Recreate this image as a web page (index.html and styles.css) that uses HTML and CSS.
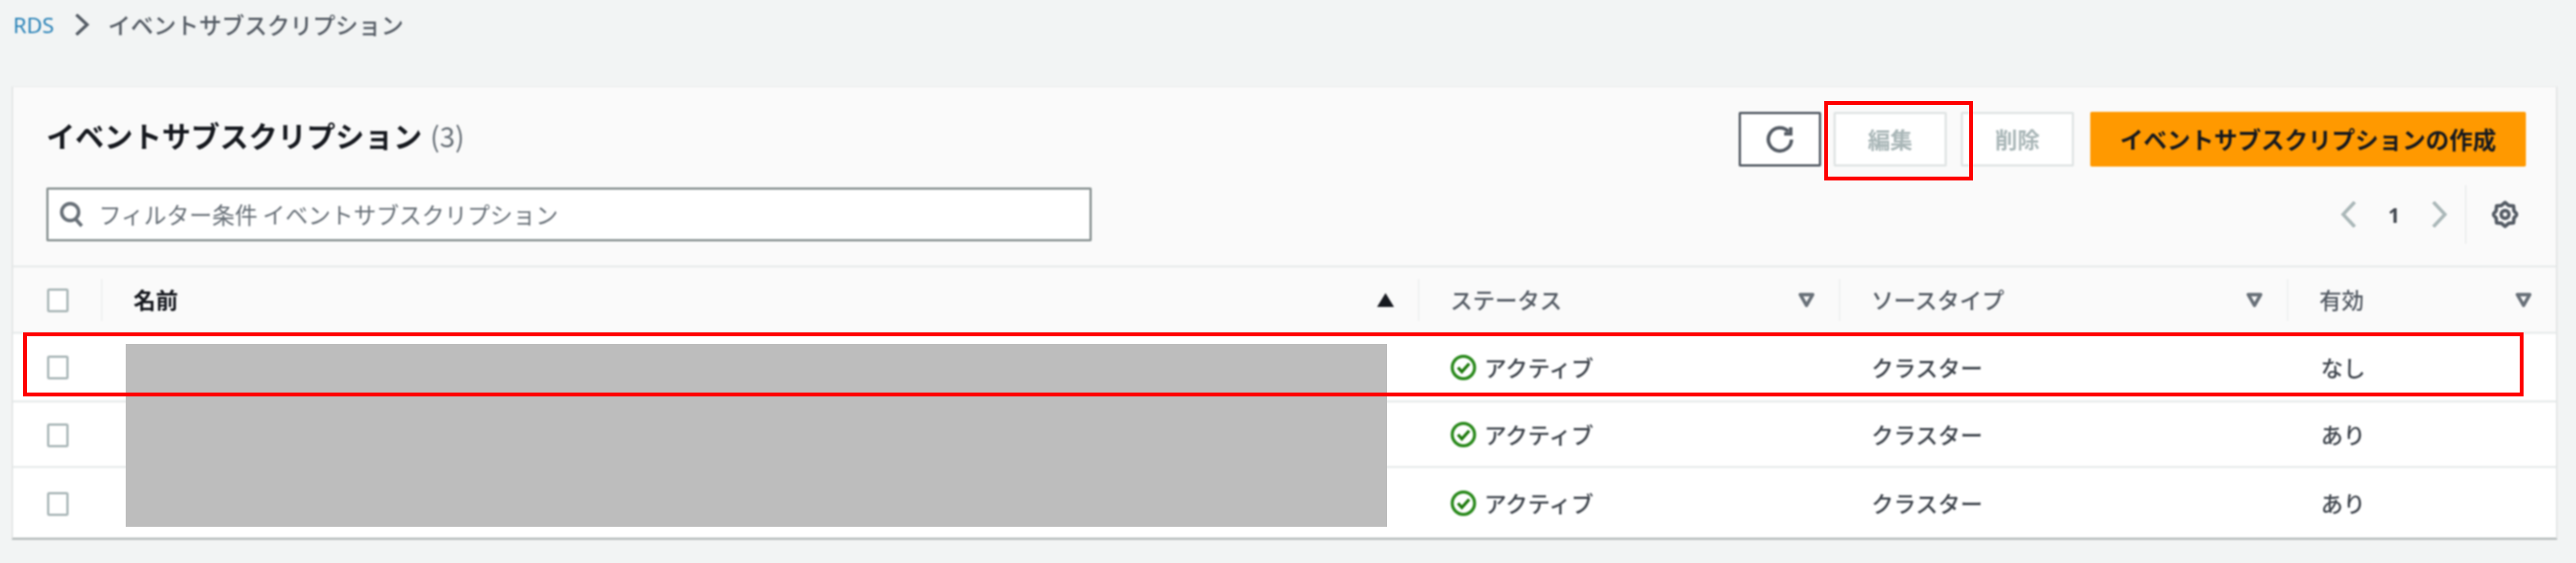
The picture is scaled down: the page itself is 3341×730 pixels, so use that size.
FILE: index.html
```html
<!DOCTYPE html>
<html lang="ja">
<head>
<meta charset="utf-8">
<title>イベントサブスクリプション</title>
<link rel="stylesheet" href="styles.css">
</head>
<body>
<div class="page">
  <nav class="breadcrumb">
    <a class="crumb-link">RDS</a>
    <svg class="crumb-sep" viewBox="0 0 22 28"><path d="M4 1 L18 14 L4 27"/></svg>
    <span>イベントサブスクリプション</span>
  </nav>

  <section class="card">
    <header class="card-head">
      <div class="head-row">
        <h1 class="title">イベントサブスクリプション <span class="count">(3)</span></h1>
        <div class="actions">
          <button class="btn btn-refresh" aria-label="更新">
            <svg class="icon-refresh" viewBox="0 0 38 38"><path d="M29.5 8.5 A15 15 0 1 0 33.5 19"/><path d="M32.5 3 V11.5 H24"/></svg>
          </button>
          <button class="btn btn-disabled btn-edit">編集</button>
          <button class="btn btn-disabled btn-delete">削除</button>
          <button class="btn btn-primary">イベントサブスクリプションの作成</button>
        </div>
      </div>
      <div class="head-row filter-row">
        <label class="search">
          <svg class="icon-search" viewBox="0 0 32 34"><circle cx="14" cy="14" r="11"/><path d="M21 23 L29 32"/></svg>
          <span class="placeholder">フィルター条件 イベントサブスクリプション</span>
        </label>
        <div class="pager">
          <svg class="chev" viewBox="0 0 20 34"><path d="M18 1 L3 17 L18 33"/></svg>
          <span class="page-num">1</span>
          <svg class="chev" viewBox="0 0 20 34"><path d="M2 1 L17 17 L2 33"/></svg>
          <span class="pager-sep"></span>
          <svg class="icon-gear" viewBox="0 0 34 36"><path d="M32.5 18 28.55 22.78 27.96 28.96 21.78 29.55 17 33.5 12.22 29.55 6.04 28.96 5.45 22.78 1.5 18 5.45 13.22 6.04 7.04 12.22 6.45 17 2.5 21.78 6.45 27.96 7.04 28.55 13.22Z"/><circle cx="17" cy="18" r="5"/></svg>
        </div>
      </div>
    </header>

    <div class="table">
      <div class="row row-head">
        <div class="cell-check"><span class="checkbox"></span></div>
        <div class="th th-name"><span>名前</span><svg class="sort" viewBox="0 0 24 20"><path class="solid" d="M12 1 L23 19 H1 Z"/></svg></div>
        <div class="th th-status"><span>ステータス</span><svg class="sort" viewBox="0 0 24 20"><path d="M4 3 H20 L12 17 Z"/></svg></div>
        <div class="th th-source"><span>ソースタイプ</span><svg class="sort" viewBox="0 0 24 20"><path d="M4 3 H20 L12 17 Z"/></svg></div>
        <div class="th th-enabled"><span>有効</span><svg class="sort" viewBox="0 0 24 20"><path d="M4 3 H20 L12 17 Z"/></svg></div>
      </div>

      <div class="row row-1">
        <div class="cell-check"><span class="checkbox"></span></div>
        <div class="td"></div>
        <div class="td td-status"><svg class="icon-ok" viewBox="0 0 34 34"><circle cx="17" cy="17" r="14.5"/><path d="M10 17 L15 22.5 L24.5 12"/></svg>アクティブ</div>
        <div class="td td-source">クラスター</div>
        <div class="td td-enabled">なし</div>
      </div>
      <div class="row row-2">
        <div class="cell-check"><span class="checkbox"></span></div>
        <div class="td"></div>
        <div class="td td-status"><svg class="icon-ok" viewBox="0 0 34 34"><circle cx="17" cy="17" r="14.5"/><path d="M10 17 L15 22.5 L24.5 12"/></svg>アクティブ</div>
        <div class="td td-source">クラスター</div>
        <div class="td td-enabled">あり</div>
      </div>
      <div class="row row-3">
        <div class="cell-check"><span class="checkbox"></span></div>
        <div class="td"></div>
        <div class="td td-status"><svg class="icon-ok" viewBox="0 0 34 34"><circle cx="17" cy="17" r="14.5"/><path d="M10 17 L15 22.5 L24.5 12"/></svg>アクティブ</div>
        <div class="td td-source">クラスター</div>
        <div class="td td-enabled">あり</div>
      </div>
    </div>
  </section>

  <div class="redaction"></div>
  <div class="mark mark-row"></div>
  <div class="mark mark-edit"></div>
</div>
</body>
</html>
```

FILE: styles.css
```css
* { box-sizing: border-box; }

html, body {
  margin: 0;
  padding: 0;
  background: #f2f4f4;
}

body {
  font-family: "Noto Sans CJK JP", "Noto Sans", sans-serif;
  font-size: 29px;
  color: #16191f;
}

.page {
  position: relative;
  width: 3341px;
  height: 730px;
  overflow: hidden;
}

/* breadcrumb */
.breadcrumb {
  display: flex;
  align-items: center;
  height: 64px;
  margin-bottom: 48px;
  padding-left: 17px;
  color: #545b64;
  font-size: 29.5px;
  font-weight: 500;
  line-height: 1;
  filter: blur(0.8px);
}
.crumb-link { color: #2b83b8; font-family: "Noto Sans", sans-serif; font-weight: 400; font-size: 28px; letter-spacing: 0; width: 78px; }
.crumb-sep { width: 22px; height: 28px; margin-right: 23px; fill: none; stroke: #545b64; stroke-width: 4; }

/* card */
.card {
  width: 3302px;
  height: 588px;
  margin-left: 15px;
  background: #fff;
  border-left: 2px solid #e3e6e6;
  border-right: 2px solid #e3e6e6;
  border-top: 1px solid #eaeded;
  border-bottom: 3px solid #b9bebe;
  filter: blur(0.8px);
}

.card-head {
  height: 234px;
  padding: 32px 39px 0 43px;
  background: #fafafa;
  border-bottom: 3px solid #eaeded;
}

.head-row {
  display: flex;
  justify-content: space-between;
  align-items: flex-start;
}

.filter-row {
  align-items: center;
  margin-top: 24px;
}

.title {
  margin: 0;
  font-size: 37.5px;
  line-height: 60px;
  font-weight: 700;
  color: #16191f;
}
.count { color: #687078; font-weight: 400; font-size: 36px; margin-left: 2px; }

/* buttons */
.actions { display: flex; }

.btn {
  height: 71px;
  padding: 0;
  font: inherit;
  font-size: 29px;
  font-weight: 700;
  line-height: 1;
  background: #fff;
  border-radius: 2px;
}
.btn-refresh {
  width: 107px;
  margin-right: 16px;
  border: 3px solid #545b64;
  display: flex;
  align-items: center;
  justify-content: center;
}
.icon-refresh { width: 38px; height: 38px; fill: none; stroke: #545b64; stroke-width: 4.5; }
.btn-disabled { border: 3px solid #e1e5e5; color: #aab7b8; }
.btn-edit { width: 147px; margin-right: 18px; }
.btn-delete { width: 147px; margin-right: 21px; }
.btn-primary { width: 565px; border: 0; background: #f90; color: #16191f; font-size: 30.5px; }

/* search */
.search {
  display: flex;
  align-items: center;
  width: 1356px;
  height: 70px;
  padding-left: 14px;
  background: #fff;
  border: 3px solid #8d9696;
  border-radius: 2px;
}
.icon-search { width: 32px; height: 34px; margin-right: 19px; flex: none; fill: none; stroke: #687078; stroke-width: 4.5; }
.placeholder { color: #687078; font-size: 29.5px; line-height: 1; }

/* pagination */
.pager { display: flex; align-items: center; height: 76px; margin-right: 10px; }
.chev { width: 20px; height: 34px; fill: none; stroke: #aab7b8; stroke-width: 4.5; }
.page-num { width: 98px; text-align: center; font-family: "Noto Sans", sans-serif; font-size: 27px; font-weight: 700; line-height: 1; color: #3f454d; }
.pager-sep { width: 2px; height: 76px; margin: 0 33px 0 23px; background: #eaeded; }
.icon-gear { width: 34px; height: 36px; fill: none; stroke: #545b64; stroke-width: 4.5; stroke-linejoin: round; }

/* table */
.row {
  display: grid;
  grid-template-columns: 114px 1708px 546px 581px 1fr;
  align-items: center;
  border-bottom: 3px solid #eaeded;
}
.row-head { height: 86px; background: #fafafa; }
.row-1 { height: 89px; }
.row-2 { height: 85px; }
.row-3 { height: 90px; border-bottom: 0; }

.cell-check { padding-left: 44px; display: flex; align-items: center; }
.checkbox {
  display: block;
  width: 28px;
  height: 31px;
  background: #fff;
  border: 3px solid #aab7b8;
  border-radius: 3px;
}
.row-head .checkbox, .row-2 .checkbox, .row-3 .checkbox { margin-top: 2px; }

.th {
  display: flex;
  align-items: center;
  justify-content: space-between;
  height: 54px;
  border-left: 2px solid #eef0f0;
  padding-left: 40px;
  padding-right: 30px;
  color: #545b64;
  font-size: 29px;
  line-height: 1;
  font-weight: 500;
}
.th-name { color: #16191f; font-weight: 700; }
.sort { width: 24px; height: 20px; fill: #fafafa; stroke: #687078; stroke-width: 4.5; stroke-linejoin: round; }
.sort .solid { fill: #16191f; stroke: none; }

.td {
  display: flex;
  align-items: center;
  padding-left: 42px;
  color: #3f454d;
  font-size: 29px;
  font-weight: 500;
  line-height: 1;
}
.td-source { padding-left: 42px; }
.td-enabled { padding-left: 44px; }
.icon-ok { width: 34px; height: 35px; margin-right: 10px; flex: none; fill: none; stroke: #2a8a1c; stroke-width: 4; }
.icon-ok path { stroke: #1d7a0c; }

/* overlays on the screenshot */
.redaction {
  position: absolute;
  left: 163px;
  top: 446px;
  width: 1636px;
  height: 237px;
  background: #bdbdbd;
}
.mark {
  position: absolute;
  border: 5px solid #f00;
}
.mark-row { left: 30px; top: 431px; width: 3243px; height: 83px; }
.mark-edit { left: 2366px; top: 131px; width: 193px; height: 103px; }
```
